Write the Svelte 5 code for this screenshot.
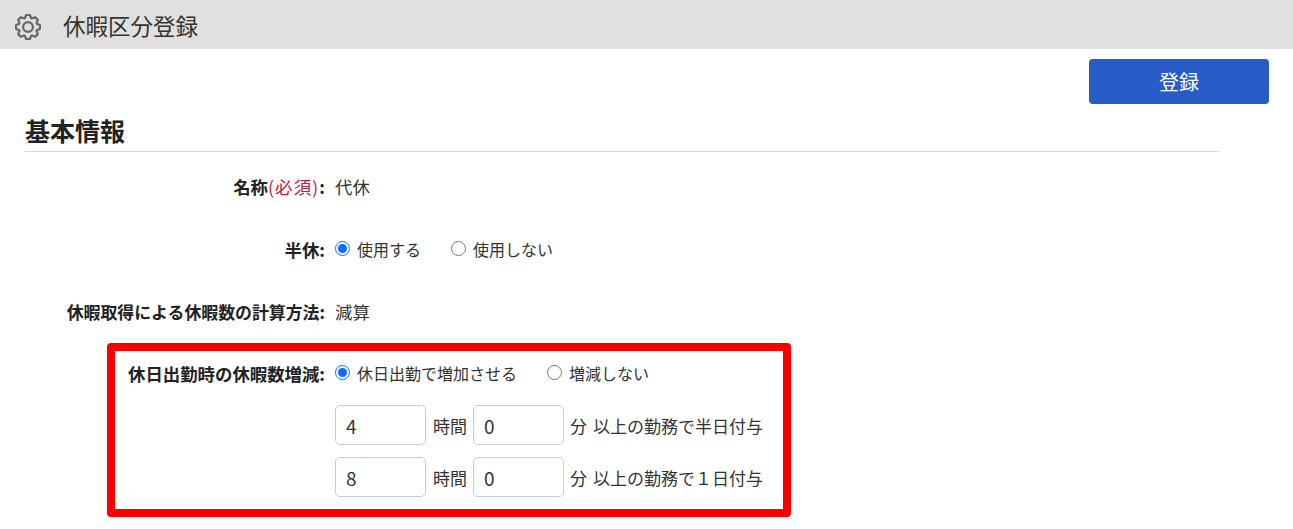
<script>
	let half = $state('use');
	let holiday = $state('add');
	const grants = [
		{ hours: '4', minutes: '0', text: '以上の勤務で半日付与' },
		{ hours: '8', minutes: '0', text: '以上の勤務で１日付与' }
	];

	// eight broad teeth around the centre of a 24 box
	const polar = (r, deg) => {
		const a = (deg * Math.PI) / 180;
		return `${(12 + r * Math.sin(a)).toFixed(2)} ${(12 - r * Math.cos(a)).toFixed(2)}`;
	};
	const gearPath =
		[0, 45, 90, 135, 180, 225, 270, 315]
			.map((d, i) => `${i ? 'L' : 'M'}${polar(8.6, d - 20)} L${polar(11.2, d - 9)} L${polar(11.2, d + 9)} L${polar(8.6, d + 20)}`)
			.join(' ') + ' Z';
</script>

<header class="title-bar">
	<svg class="gear" viewBox="0 0 24 24" width="26" height="26" fill="none" stroke="#666" stroke-width="2" stroke-linejoin="round">
		<circle cx="12" cy="12" r="4.5" />
		<path d={gearPath} />
	</svg>
	<h1>休暇区分登録</h1>
</header>

<main>
	<div class="actions">
		<button type="button">登録</button>
	</div>

	<h2>基本情報</h2>

	<div class="row first">
		<span class="label">名称<em>(必須)</em>:</span>
		<span class="value">代休</span>
	</div>

	<div class="row second">
		<span class="label">半休:</span>
		<label class="radio"><input type="radio" bind:group={half} value="use" />使用する</label>
		<label class="radio"><input type="radio" bind:group={half} value="none" />使用しない</label>
	</div>

	<div class="row third">
		<span class="label">休暇取得による休暇数の計算方法:</span>
		<span class="value">減算</span>
	</div>

	<section class="highlight">
		<div class="row">
			<span class="label">休日出勤時の休暇数増減:</span>
			<label class="radio"><input type="radio" bind:group={holiday} value="add" />休日出勤で増加させる</label>
			<label class="radio"><input type="radio" bind:group={holiday} value="none" />増減しない</label>
		</div>
		{#each grants as grant}
			<div class="grant">
				<input class="num" type="text" value={grant.hours} />
				<span class="unit">時間</span>
				<input class="num" type="text" value={grant.minutes} />
				<span class="unit">分</span>
				<span class="note">{grant.text}</span>
			</div>
		{/each}
	</section>
</main>

<style>
	:global(body) {
		font-family: "Noto Sans CJK JP", "Liberation Sans", sans-serif;
		font-size: 16px;
		color: #333;
		background: #fff;
		overflow: hidden;
	}
	.title-bar {
		display: flex;
		align-items: center;
		height: 49px;
		padding-left: 15px;
		background: #e0e0de;
	}
	.gear {
		margin: 4px 22px 0 0;
	}
	h1 {
		margin: 0;
		font-size: 22.5px;
		font-weight: 400;
		color: #333;
	}
	.actions {
		display: flex;
		justify-content: flex-end;
		padding: 10px 24px 0 0;
	}
	button {
		width: 180px;
		height: 45px;
		border: 0;
		border-radius: 4px;
		background: #295bc6;
		color: #fff;
		font: inherit;
		font-size: 20px;
	}
	h2 {
		margin: 9px 74px 0 25px;
		height: 39px;
		box-sizing: border-box;
		border-bottom: 1px solid #d8d8d8;
		font-size: 25px;
		line-height: 34px;
		color: #222;
	}
	.row {
		display: flex;
		align-items: center;
		height: 24px;
	}
	.first {
		margin-top: 22px;
	}
	.second {
		margin-top: 39px;
	}
	.third {
		margin-top: 38px;
	}
	.label {
		width: 325px;
		margin-right: 10px;
		text-align: right;
		font-size: 17.4px;
		font-weight: 700;
		color: #222;
	}
	.third .label {
		font-size: 16.9px;
	}
	.value {
		font-size: 17.4px;
	}
	em {
		font-style: normal;
		font-weight: 400;
		letter-spacing: 1.2px;
		color: #b8203c;
	}
	.radio {
		display: flex;
		align-items: center;
		margin-right: 30px;
	}
	.radio input {
		width: 15px;
		height: 15px;
		margin: -2px 7px 0 0;
		accent-color: #0d6efd;
	}
	.highlight {
		width: 684px;
		box-sizing: border-box;
		margin: 20px 0 0 107px;
		padding: 10px 0 12px;
		border: 8px solid #f80000;
		border-radius: 4px;
	}
	.highlight .label {
		width: 210px;
	}
	.grant {
		display: flex;
		align-items: center;
		margin: 20px 0 0 220px;
		font-size: 17px;
	}
	.grant + .grant {
		margin-top: 12px;
	}
	.num {
		width: 91px;
		height: 40px;
		box-sizing: border-box;
		padding: 0 10px;
		border: 1px solid #ccc;
		border-radius: 5px;
		font: inherit;
		font-size: 19px;
		color: #333;
	}
	.unit {
		margin: 0 6px 0 7px;
	}
	.grant .unit:nth-of-type(2) {
		margin-left: 6px;
	}
	.note {
		margin-left: 0;
	}
</style>
